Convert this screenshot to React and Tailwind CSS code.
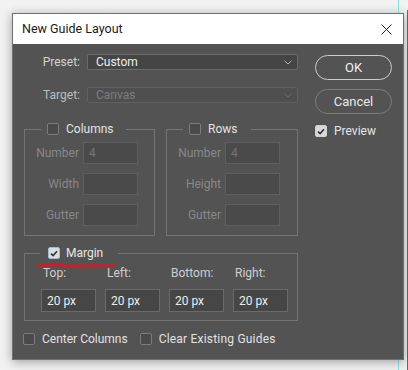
import React from 'react';

const font = { fontFamily: 'Roboto, "Noto Sans", "Liberation Sans", sans-serif' };

const Check = ({ checked, focus }) => (
  <span
    className={
      'flex h-[12px] w-[12px] shrink-0 items-center justify-center rounded-[2px] border ' +
      (checked
        ? focus
          ? 'border-[#9db9dc] bg-[#dcdcdc]'
          : 'border-[#d0d0d0] bg-[#d8d8d8]'
        : 'border-[#7c7c7c] bg-[#4a4a4a]')
    }
  >
    {checked && (
      <svg width="8" height="7" viewBox="0 0 8 7">
        <path d="M1 3.6 L3.1 5.6 L7 1.2" fill="none" stroke="#333" strokeWidth="1.6" />
      </svg>
    )}
  </span>
);

const Chevron = ({ color }) => (
  <svg width="8" height="5" viewBox="0 0 8 5">
    <path d="M0.5 0.8 L4 4 L7.5 0.8" fill="none" stroke={color} strokeWidth="1" />
  </svg>
);

const Field = ({ label, value }) => (
  <div className="flex items-center">
    <span className="w-[58px] pr-[4px] text-right text-[12px] text-[#888888]">{label}</span>
    <div className="flex h-[22px] w-[55px] items-center border border-[#5e5e5e] bg-[#4a4a4a] pl-[5px] text-[12px] text-[#767676]">
      {value}
    </div>
  </div>
);

const Group = ({ title, legendPr, w, labels }) => (
  <fieldset className={`border border-[#747474] ${w} pb-[9px] pt-[6px]`}>
    <legend className="ml-[16px] flex h-[14px] items-center gap-[7px] pl-[6px] text-[12px] text-[#e2e2e2]" style={{ paddingRight: legendPr }}>
      <Check />
      <span>{title}</span>
    </legend>
    <div className="flex flex-col gap-[9px]">
      {labels.map((l, i) => (
        <Field key={l} label={l} value={i === 0 ? '4' : ''} />
      ))}
    </div>
  </fieldset>
);

const MarginBox = ({ label }) => (
  <div className="flex w-[55px] flex-col">
    <span className="h-[16px] pl-[2px] text-[12px] leading-[16px] text-[#cfcfcf]">{label}</span>
    <div className="mt-[8px] flex h-[23px] items-center border border-[#6a6a6a] bg-[#464646] pl-[5px] text-[12px] text-[#ececec]">
      20 px
    </div>
  </div>
);

const App = () => {
  return (
    <div className="relative h-[370px] w-[408px] overflow-hidden bg-[#f2f2f2] pt-[13px] pl-[12px]" style={font}>
      <div className="absolute left-[398px] top-0 h-full w-[1px] bg-[#86e3ea]" />
      <div className="absolute left-[407px] top-[10px] h-full w-[1px] bg-[#6a6a6a]" />
      <div className="relative flex h-[347px] w-[392px] flex-col border border-[#707070] bg-[#535353] shadow-[0_2px_10px_rgba(0,0,0,0.35)]">
        <div className="flex h-[30px] shrink-0 items-center justify-between bg-white pl-[9px] pr-[11px]">
          <span className="text-[12.5px] text-[#1a1a1a]">New Guide Layout</span>
          <svg width="11" height="11" viewBox="0 0 11 11">
            <path d="M0.5 0.5 L10.5 10.5 M10.5 0.5 L0.5 10.5" stroke="#222" strokeWidth="1" />
          </svg>
        </div>

        <div className="flex pl-[11px] pt-[10px]">
          <div className="flex w-[274px] flex-col">
            <div className="flex h-[16px] items-center">
              <span className="w-[56px] text-right text-[12px] text-[#d2d2d2]">Preset:</span>
              <div className="ml-[7px] flex h-[16px] w-[211px] items-center justify-between rounded-[2px] border border-[#6b6b6b] bg-[#454545] pl-[8px] pr-[5px] text-[12px] text-[#efefef]">
                <span>Custom</span>
                <Chevron color="#b0b0b0" />
              </div>
            </div>
            <div className="mt-[17px] flex h-[16px] items-center">
              <span className="w-[56px] text-right text-[12px] text-[#bdbdbd]">Target:</span>
              <div className="ml-[7px] flex h-[16px] w-[211px] items-center justify-between rounded-[2px] border border-[#606060] bg-[#4f4f4f] pl-[8px] pr-[5px] text-[12px] text-[#7c7c7c]">
                <span>Canvas</span>
                <Chevron color="#6e6e6e" />
              </div>
            </div>

            <div className="mt-[19px] flex gap-[11px]">
              <Group title="Columns" legendPr="12px" w="w-[131px]" labels={['Number', 'Width', 'Gutter']} />
              <Group title="Rows" legendPr="14px" w="w-[132px]" labels={['Number', 'Height', 'Gutter']} />
            </div>

            <div className="relative mt-[10px]">
              <fieldset className="border border-[#747474] pb-[8px] pt-[5px]">
                <legend className="ml-[15px] flex h-[14px] items-center gap-[6px] pl-[8px] pr-[15px] text-[12px] text-[#e6e6e6]">
                  <Check checked focus />
                  <span>Margin</span>
                </legend>
                <div className="flex gap-[9px] pl-[16px]">
                  <MarginBox label="Top:" />
                  <MarginBox label="Left:" />
                  <MarginBox label="Bottom:" />
                  <MarginBox label="Right:" />
                </div>
              </fieldset>
              <svg className="absolute left-[13px] top-[17px]" width="80" height="6" viewBox="0 0 80 6">
                <path d="M0 3 C10 2 20 1.6 26 2 M25 3.2 C45 3.4 62 2.6 77 2.4" fill="none" stroke="#e3141f" strokeWidth="2.4" strokeLinecap="round" />
              </svg>
            </div>

            <div className="-ml-px mt-[10px] flex h-[16px] items-center text-[12px] text-[#e2e2e2]">
              <Check />
              <span className="ml-[7px]">Center Columns</span>
              <span className="ml-[12px]"><Check /></span>
              <span className="ml-[7px] tracking-[0.2px]">Clear Existing Guides</span>
            </div>
          </div>

          <div className="ml-[17px] flex w-[77px] flex-col">
            <button className="mt-[1px] h-[25px] rounded-full border-[1.5px] border-[#cdcdcd] text-[13px] text-[#f0f0f0]">OK</button>
            <button className="mt-[9px] h-[25px] rounded-full border-[1.5px] border-[#7d7d7d] text-[13px] text-[#e8e8e8]">Cancel</button>
            <div className="mt-[10px] flex h-[14px] items-center gap-[7px] text-[12px] text-[#e4e4e4]">
              <Check checked />
              <span>Preview</span>
            </div>
          </div>
        </div>
      </div>
    </div>
  );
};

export default App;
